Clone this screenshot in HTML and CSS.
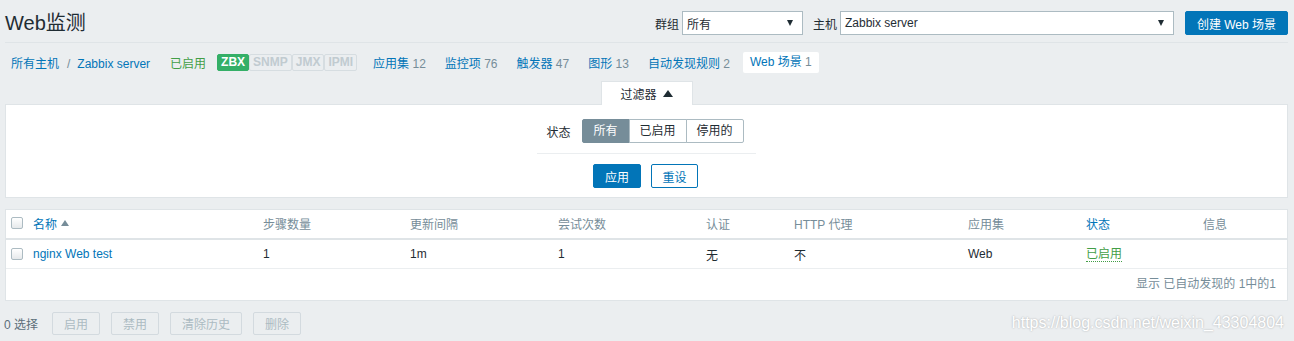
FILE: index.html
```html
<!DOCTYPE html>
<html lang="zh-CN">
<head>
    <meta charset="UTF-8">
    <title>Web监测</title>
    <link rel="stylesheet" href="styles.css">
</head>
<body>
    <div class="page">
        <header class="header">
            <h1 class="title">Web监测</h1>
            <div class="controls">
                <label class="ctl-label">群组</label>
                <div class="select select-group"><span>所有</span><i class="arrow"></i></div>
                <label class="ctl-label host-label">主机</label>
                <div class="select select-host"><span>Zabbix server</span><i class="arrow"></i></div>
                <button class="btn-primary btn-create">创建 Web 场景</button>
            </div>
        </header>

        <nav class="host-nav">
            <div class="crumbs"><a href="#">所有主机</a><span class="sep">/</span><a href="#">Zabbix server</a></div>
            <span class="state-on">已启用</span>
            <div class="badges">
                <span class="badge on">ZBX</span>
                <span class="badge">SNMP</span>
                <span class="badge">JMX</span>
                <span class="badge">IPMI</span>
            </div>
            <a class="nav-item" href="#">应用集 <em>12</em></a>
            <a class="nav-item" href="#">监控项 <em>76</em></a>
            <a class="nav-item" href="#">触发器 <em>47</em></a>
            <a class="nav-item" href="#">图形 <em>13</em></a>
            <a class="nav-item" href="#">自动发现规则 <em>2</em></a>
            <span class="nav-item current">Web 场景 <em>1</em></span>
        </nav>

        <div class="filter">
            <div class="filter-tabs">
                <span class="filter-tab">过滤器 <i class="up"></i></span>
            </div>
            <div class="filter-body">
                <div class="filter-row">
                    <span class="filter-label">状态</span>
                    <div class="seg">
                        <span class="seg-item active">所有</span>
                        <span class="seg-item">已启用</span>
                        <span class="seg-item">停用的</span>
                    </div>
                </div>
                <div class="filter-line"></div>
                <div class="filter-buttons">
                    <button class="btn-primary btn-small">应用</button>
                    <button class="btn-alt btn-small">重设</button>
                </div>
            </div>
        </div>

        <div class="list">
            <div class="row head">
                <span><i class="check"></i></span>
                <span class="sort">名称 <i class="up small"></i></span>
                <span>步骤数量</span>
                <span>更新间隔</span>
                <span>尝试次数</span>
                <span>认证</span>
                <span>HTTP 代理</span>
                <span>应用集</span>
                <span class="sort">状态</span>
                <span>信息</span>
            </div>
            <div class="row">
                <span><i class="check"></i></span>
                <span><a href="#">nginx Web test</a></span>
                <span>1</span>
                <span>1m</span>
                <span>1</span>
                <span>无</span>
                <span>不</span>
                <span>Web</span>
                <span><span class="enabled">已启用</span></span>
                <span></span>
            </div>
            <div class="list-foot">显示 已自动发现的 1中的1</div>
        </div>

        <div class="actions">
            <span class="selected">0 选择</span>
            <button class="btn-off">启用</button>
            <button class="btn-off">禁用</button>
            <button class="btn-off">清除历史</button>
            <button class="btn-off">删除</button>
        </div>
    </div>

    <div class="watermark">https://blog.csdn.net/weixin_43304804</div>
</body>
</html>
```

FILE: styles.css
```css
* {
    margin: 0;
    padding: 0;
    box-sizing: border-box;
}

body {
    background: #ebeef0;
    font-family: "Liberation Sans", "Noto Sans CJK SC", sans-serif;
    font-size: 12px;
    color: #1f2c33;
    height: 341px;
    overflow: hidden;
    position: relative;
}

a {
    color: #0275b8;
    text-decoration: none;
}

button {
    font-family: inherit;
    font-size: 12px;
    cursor: pointer;
}

.page {
    padding: 0 6px 0 5px;
}

/* header */

.header {
    display: flex;
    justify-content: space-between;
    align-items: center;
    padding: 11px 0 7px;
    border-bottom: 1px solid #dfe4e7;
}

.title {
    font-size: 20px;
    font-weight: normal;
    line-height: 24px;
    color: #1f2c33;
}

.controls {
    display: flex;
    align-items: center;
}

.ctl-label {
    margin-right: 3px;
}

.host-label {
    margin-left: 10px;
}

.select {
    height: 24px;
    background: #fff;
    border: 1px solid #acbbc2;
    display: flex;
    align-items: center;
    justify-content: space-between;
    padding: 0 9px 0 4px;
}

.select-group {
    width: 121px;
}

.select-host {
    width: 334px;
}

.arrow {
    width: 0;
    height: 0;
    border-left: 3px solid transparent;
    border-right: 3px solid transparent;
    border-top: 6px solid #1f2c33;
}

.btn-primary {
    background: #0275b8;
    color: #fff;
    border: 1px solid #0275b8;
    border-radius: 2px;
    height: 24px;
}

.btn-create {
    margin-left: 11px;
    width: 103px;
}

/* host navigation */

.host-nav {
    display: flex;
    align-items: center;
    height: 38px;
    padding-left: 6px;
}

.crumbs .sep {
    color: #768d99;
    margin: 0 7px 0 8px;
}

.state-on {
    color: #429e47;
    margin-left: 20px;
}

.badges {
    display: flex;
    margin-left: 11px;
    margin-right: 16px;
}

.badge {
    height: 17px;
    line-height: 15px;
    padding: 0 3px;
    font-weight: bold;
    color: #c1cbd0;
    border: 1px solid #d6dde1;
    background: #ebeef0;
    border-radius: 2px;
}

.badge.on {
    background: #34af67;
    border-color: #34af67;
    color: #fff;
}

.nav-item {
    margin-right: 19px;
}

.nav-item em {
    font-style: normal;
    color: #768d99;
}

.nav-item.current {
    margin-left: -6px;
    height: 21px;
    line-height: 21px;
    padding: 0 7px;
    background: #fff;
    color: #0275b8;
    border-radius: 2px;
}

/* filter */

.filter-tabs {
    display: flex;
    justify-content: center;
}

.filter-tab {
    position: relative;
    margin-bottom: -1px;
    width: 92px;
    height: 24px;
    display: flex;
    align-items: center;
    justify-content: center;
    gap: 6px;
    background: #fff;
    border: 1px solid #dfe4e7;
    border-bottom: none;
}

.up {
    display: inline-block;
    width: 0;
    height: 0;
    border-left: 5px solid transparent;
    border-right: 5px solid transparent;
    border-bottom: 7px solid #1f2c33;
}

.up.small {
    border-left-width: 4px;
    border-right-width: 4px;
    border-bottom: 6px solid #768d99;
    margin-left: 4px;
}

.filter-body {
    background: #fff;
    border: 1px solid #dfe4e7;
    padding: 14px 0 9px;
    display: flex;
    flex-direction: column;
    align-items: center;
}

.filter-row {
    display: flex;
    align-items: center;
    margin-left: -3px;
}

.filter-label {
    margin-right: 11px;
}

.seg {
    display: flex;
    height: 24px;
}

.seg-item {
    width: 58px;
    line-height: 22px;
    text-align: center;
    border: 1px solid #acbbc2;
    margin-left: -1px;
    background: #fff;
}

.seg-item:first-child {
    width: 48px;
    margin-left: 0;
    border-radius: 2px 0 0 2px;
}

.seg-item:last-child {
    border-radius: 0 2px 2px 0;
}

.seg-item.active {
    background: #768d99;
    border-color: #768d99;
    color: #fff;
}

.filter-line {
    width: 219px;
    height: 1px;
    background: #ebeef0;
    margin: 10px 0;
}

.filter-buttons {
    display: flex;
    gap: 10px;
    margin-left: -2px;
}

.btn-small {
    width: 48px;
    height: 24px;
}

.btn-alt {
    background: #fff;
    color: #0275b8;
    border: 1px solid #0275b8;
    border-radius: 2px;
    width: 47px;
}

/* list */

.list {
    margin-top: 11px;
    background: #fff;
    border: 1px solid #dfe4e7;
}

.row {
    display: grid;
    grid-template-columns: 22px 230px 147px 148px 148px 88px 174px 118px 117px 1fr;
    align-items: center;
    height: 29px;
    padding-left: 5px;
    border-bottom: 1px solid #ebeef0;
}

.row.head {
    height: 30px;
    padding-bottom: 2px;
    color: #768d99;
    border-bottom: 2px solid #dfe4e7;
}

.row > span {
    display: flex;
    align-items: center;
}

.row.head .sort {
    color: #0275b8;
}

.check {
    display: block;
    width: 12px;
    height: 12px;
    border: 1px solid #acbbc2;
    border-radius: 2px;
    background: linear-gradient(#fff, #e6e9eb);
}

.enabled {
    color: #429e47;
    border-bottom: 1px dotted #429e47;
    line-height: 14px;
}

.list-foot {
    height: 31px;
    line-height: 31px;
    text-align: right;
    padding-right: 11px;
    color: #768d99;
}

/* mass actions */

.actions {
    display: flex;
    align-items: center;
    margin-top: 11px;
    margin-left: -1px;
    gap: 11px;
}

.selected {
    color: #5c6f7a;
    margin-right: 3px;
}

.btn-off {
    height: 23px;
    padding: 0 11px;
    background: #ebeef0;
    color: #acbbc2;
    border: 1px solid #d3dadf;
    border-radius: 2px;
    cursor: default;
}

.watermark {
    position: absolute;
    right: 10px;
    bottom: 9px;
    font-size: 16px;
    color: #fff;
    text-shadow: 0 0 2px rgba(0, 0, 0, 0.3);
}
```
